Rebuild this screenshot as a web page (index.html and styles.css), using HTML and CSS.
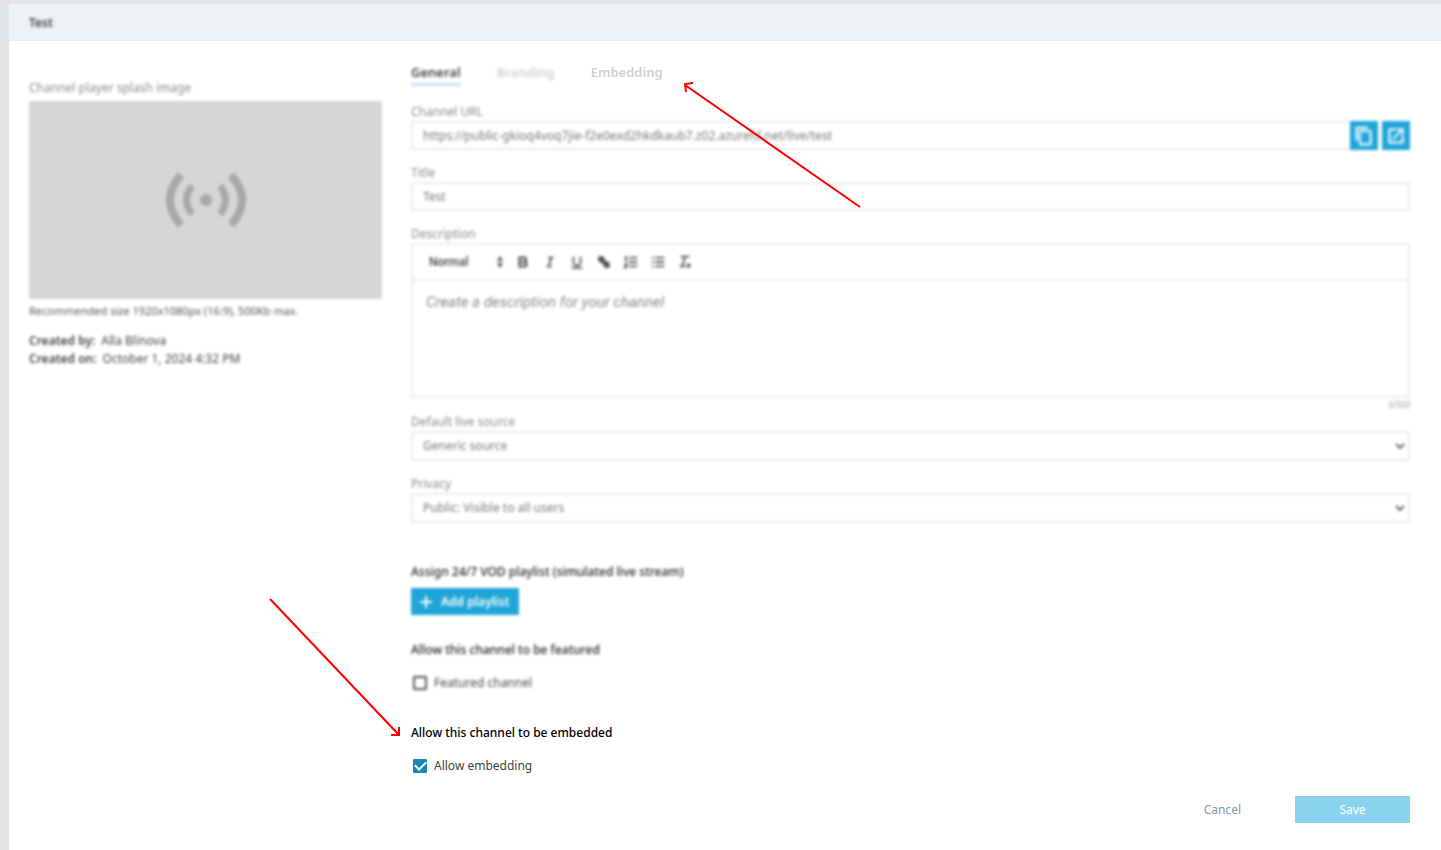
FILE: index.html
```
<!DOCTYPE html>
<html lang="en">
	<head>
		<meta charset="UTF-8">
		<title>Test</title>
		<link rel="stylesheet" href="styles.css">
	</head>
	<body>
		<div class="panel">
			<header class="panel-head">
				<h1 class="soft">Test</h1>
			</header>
			<div class="content">
				<aside class="side soft">
					<p class="label">Channel player splash image</p>
					<div class="splash">
						<svg width="80" height="56" viewBox="0 0 80 56" fill="none" stroke="#a8a8a8" stroke-width="8">
							<path d="M15 3Q-7 28 15 53M65 3Q87 28 65 53"/>
							<path d="M26 14Q15 28 26 42M54 14Q65 28 54 42" stroke-width="7"/>
							<circle cx="40" cy="28" r="6" fill="#a8a8a8" stroke="none"/>
						</svg>
					</div>
					<p class="hint">Recommended size 1920x1080px (16:9), 500Kb max.</p>
					<dl class="meta">
						<div><dt>Created by:</dt><dd>Alla Blinova</dd></div>
						<div><dt>Created on:</dt><dd>October 1, 2024 4:32 PM</dd></div>
					</dl>
				</aside>
				<main class="form">
					<nav class="tabs">
						<a class="tab active soft" href="#">General</a>
						<a class="tab soft" href="#">Branding</a>
						<a class="tab" href="#">Embedding</a>
					</nav>

					<div class="fields soft">
						<div class="field">
							<label class="label" for="url">Channel URL</label>
							<div class="url-row">
								<input class="control" id="url" type="text" value="https://public-gkioq4voq7jie-f2e0exd2hkdkaub7.z02.azurefd.net/live/test" readonly>
								<button class="icon-btn" type="button" aria-label="Copy">
									<svg width="20" height="20" viewBox="0 0 24 24" fill="#d9f0fa"><path d="M16 1H4a2 2 0 0 0-2 2v14h2V3h12V1zm3 4H8a2 2 0 0 0-2 2v14a2 2 0 0 0 2 2h11a2 2 0 0 0 2-2V7a2 2 0 0 0-2-2zm0 16H8V7h11v14z" stroke="#d9f0fa"/></svg>
								</button>
								<button class="icon-btn" type="button" aria-label="Open">
									<svg width="20" height="20" viewBox="0 0 24 24" fill="#d9f0fa"><path d="M19 19H5V5h7V3H5a2 2 0 0 0-2 2v14a2 2 0 0 0 2 2h14a2 2 0 0 0 2-2v-7h-2v7zM14 3v2h3.6l-9.8 9.8 1.4 1.4L19 6.400V10h2V3h-7z" stroke="#d9f0fa"/></svg>
								</button>
							</div>
						</div>
						<div class="field">
							<label class="label" for="title">Title</label>
							<input class="control" id="title" type="text" value="Test">
						</div>
						<div class="field field-desc">
							<label class="label" for="desc">Description</label>
							<div class="editor">
								<div class="toolbar">
									<button class="format" type="button">Normal
										<svg width="8" height="12" viewBox="0 0 8 12" fill="#555"><path d="M4 0l3 5H1zM4 12L1 7h6z"/></svg>
									</button>
									<button class="tool" type="button" aria-label="Bold"><svg width="16" height="16" viewBox="0 0 18 18"><path d="M5 4h5a2.500 2.500 0 0 1 0 5H5zM5 9h5.500a2.500 2.500 0 0 1 0 5H5z" stroke-width="2.500"/></svg></button>
									<button class="tool" type="button" aria-label="Italic"><svg width="16" height="16" viewBox="0 0 18 18"><path d="M7 4h6M5 14h6M8 14l2-10"/></svg></button>
									<button class="tool" type="button" aria-label="Underline"><svg width="16" height="16" viewBox="0 0 18 18"><path d="M5 3v6a4 4 0 0 0 8 0V3M3 15.500h12"/></svg></button>
									<button class="tool" type="button" aria-label="Link"><svg width="16" height="16" viewBox="0 0 18 18"><path d="M7 7l4 4" stroke-width="3"/><path d="M9 5L7 3.500A2.500 2.500 0 0 0 3.500 7L6 9.500 9 9zM9 13l2 1.500A2.500 2.500 0 0 0 14.500 11L12 8.500 9 9z" fill="#555"/></svg></button>
									<button class="tool" type="button" aria-label="Numbered list"><svg width="16" height="16" viewBox="0 0 18 18"><path d="M7 4h9M7 9h9M7 14h9M3.500 2v5M2 7h3M2 11h2.500L2 15h3"/></svg></button>
									<button class="tool" type="button" aria-label="Bulleted list"><svg width="16" height="16" viewBox="0 0 18 18"><path d="M6 4h10M6 9h10M6 14h10M2 4h2M2 9h2M2 14h2"/></svg></button>
									<button class="tool" type="button" aria-label="Clear formatting"><svg width="16" height="16" viewBox="0 0 18 18"><path d="M4 3h10M3 14h6M9 3L6 14M11 11l4 4M15 11l-4 4"/></svg></button>
								</div>
								<textarea class="editor-text" id="desc" placeholder="Create a description for your channel"></textarea>
							</div>
							<div class="counter">0/500</div>
						</div>
						<div class="field">
							<label class="label" for="source">Default live source</label>
							<div class="select-wrap">
								<select class="control" id="source"><option>Generic source</option></select>
								<svg class="chevron" width="10" height="8" viewBox="0 0 10 8"><path d="M1 2l4 4 4-4"/></svg>
							</div>
						</div>
						<div class="field">
							<label class="label" for="privacy">Privacy</label>
							<div class="select-wrap">
								<select class="control" id="privacy"><option>Public: Visible to all users</option></select>
								<svg class="chevron" width="10" height="8" viewBox="0 0 10 8"><path d="M1 2l4 4 4-4"/></svg>
							</div>
						</div>
					</div>

					<section class="group playlist soft">
						<h2>Assign 24/7 VOD playlist (simulated live stream)</h2>
						<button class="add-btn" type="button">
							<svg width="12" height="12" viewBox="0 0 12 12" stroke="#fff" stroke-width="2"><path d="M6 0v12M0 6h12"/></svg>
							Add playlist
						</button>
					</section>
					<section class="group featured soft">
						<h2>Allow this channel to be featured</h2>
						<label class="check"><input type="checkbox">Featured channel</label>
					</section>
					<section class="group embedded">
						<h2>Allow this channel to be embedded</h2>
						<label class="check"><input type="checkbox" checked>Allow embedding</label>
					</section>

					<footer class="actions">
						<button class="cancel" type="button">Cancel</button>
						<button class="save" type="button">Save</button>
					</footer>
				</main>
			</div>
		</div>

		<!-- callout arrows over the form -->
		<svg class="arrow arrow-tab" width="180" height="128" viewBox="0 0 180 128"><path d="M178 125L3 3M4 10L3 2l8-1"/></svg>
		<svg class="arrow arrow-check" width="134" height="142" viewBox="0 0 134 142"><path d="M2 2l129 136M131 130v8h-8"/></svg>
	</body>
</html>
```
FILE: styles.css
```
*{
	box-sizing: border-box;
}
body{
	margin: 0;
	background: #e1e3e5;
	color: #444;
	font: 13px/18px "Noto Sans", "Open Sans", sans-serif;
}
h1,h2,p,dl,dd{
	margin: 0;
}
button,input,select,textarea{
	font: inherit;
	color: inherit;
}
button{
	border: 0;
	padding: 0;
	background: none;
	cursor: pointer;
}
.soft{
	filter: blur(1.4px);
}
.panel{
	margin: 4px 0 0 9px;
	min-height: calc(100vh - 4px);
	background: #fff;
	box-shadow: 0 0 3px #e9ebed;
}
.panel-head{
	height: 37px;
	padding: 10px 20px;
	background: #eef2f5;
	border-bottom: 1px solid #e9edf1;
}
.panel-head h1{
	font-size: 12px;
	line-height: 18px;
	font-weight: 600;
}
.content{
	display: grid;
	grid-template-columns: 353px 1fr;
	gap: 29px;
	padding: 20px 31px 26px 20px;
}
.label{
	display: block;
	color: #888;
	font-size: 12px;
	line-height: 18px;
}
/* left column */
.side{
	padding-top: 18px;
}
.splash{
	display: flex;
	align-items: center;
	justify-content: center;
	height: 198px;
	margin-top: 4px;
	background: #d6d6d6;
}
.hint{
	margin-top: 3px;
	font-size: 11px;
	color: #555;
}
.meta{
	margin-top: 12px;
	font-size: 12px;
}
.meta div{
	display: flex;
	gap: 6px;
}
.meta dt{
	font-weight: 600;
}
/* tabs */
.tabs{
	display: flex;
	gap: 36px;
}
.tab{
	color: #d0d0d0;
	font-weight: 600;
	line-height: 22px;
	text-decoration: none;
}
.tab.active{
	color: #444;
	border-bottom: 3px solid #c5e2f1;
}
/* fields */
.fields{
	margin-top: 17px;
}
.field{
	margin-bottom: 14px;
}
.control{
	display: block;
	width: 100%;
	height: 29px;
	padding: 0 10px;
	border: 2px solid #e9ecf0;
	border-radius: 0;
	background: #fff;
	color: #777;
	font-size: 12px;
}
.url-row{
	display: flex;
	gap: 4px;
}
.url-row .control{
	border-right: 0;
	margin-right: -4px;
}
.icon-btn{
	display: flex;
	flex: 0 0 28px;
	align-items: center;
	justify-content: center;
	background: #1fa5d8;
}
.field-desc{
	margin-bottom: 0;
}
.editor{
	border: 2px solid #ecedf0;
}
.toolbar{
	display: flex;
	align-items: center;
	height: 36px;
	padding-left: 16px;
	border-bottom: 2px solid #ecedf0;
}
.format{
	display: flex;
	align-items: center;
	justify-content: space-between;
	width: 75px;
	margin-right: 5px;
	font: 500 12px/18px Roboto, sans-serif;
}
.tool{
	width: 27px;
	height: 16px;
}
.tool svg{
	display: block;
	margin: 0 auto;
	fill: none;
	stroke: #555;
	stroke-width: 2;
}
.editor-text{
	display: block;
	width: 100%;
	height: 115px;
	padding: 12px 13px;
	border: 0;
	resize: none;
	font: 15px/18px Roboto, sans-serif;
}
.editor-text::placeholder{
	color: #888;
	font-style: italic;
}
.counter{
	height: 15px;
	color: #999;
	font-size: 8px;
	line-height: 14px;
	text-align: right;
}
.select-wrap{
	position: relative;
}
.select-wrap .control{
	height: 30px;
	appearance: none;
}
.chevron{
	position: absolute;
	right: 5px;
	top: 11px;
	fill: none;
	stroke: #666;
	stroke-width: 2;
}
/* option groups */
.group h2{
	font-size: 12px;
	line-height: 18px;
	font-weight: 500;
}
.playlist{
	margin-top: 40px;
}
.add-btn{
	display: flex;
	align-items: center;
	gap: 9px;
	height: 27px;
	margin-top: 7px;
	padding: 0 10px 0 9px;
	background: #1fa5d8;
	color: #fff;
	font-size: 12px;
	font-weight: 600;
}
.featured{
	margin-top: 26px;
}
.featured h2,
.playlist h2{
	color: #222;
}
.embedded{
	margin-top: 32px;
}
.embedded h2{
	color: #000;
}
.check{
	display: flex;
	align-items: center;
	gap: 7px;
	margin-top: 15px;
	padding-left: 2px;
	font-size: 12px;
}
.check input{
	appearance: none;
	width: 14px;
	height: 14px;
	margin: 0;
	border: 2px solid #555;
	border-radius: 1px;
}
.check input:checked{
	display: grid;
	place-items: center;
	border: 0;
	background: #1b87b0;
}
.check input:checked::before{
	content: "";
	width: 9px;
	height: 5px;
	margin-bottom: 3px;
	border: solid #fff;
	border-width: 0 0 2px 2px;
	transform: rotate(-45deg);
}
.actions{
	display: flex;
	justify-content: flex-end;
	gap: 54px;
	margin-top: 21px;
	font-size: 12px;
}
.cancel{
	color: #7d98a8;
}
.save{
	width: 115px;
	height: 27px;
	background: #8ad3ee;
	color: #fff;
}
/* arrows */
.arrow{
	position: absolute;
	fill: none;
	stroke: #f00;
	stroke-width: 2;
}
.arrow-tab{
	left: 682px;
	top: 82px;
}
.arrow-check{
	left: 268px;
	top: 597px;
}
```
